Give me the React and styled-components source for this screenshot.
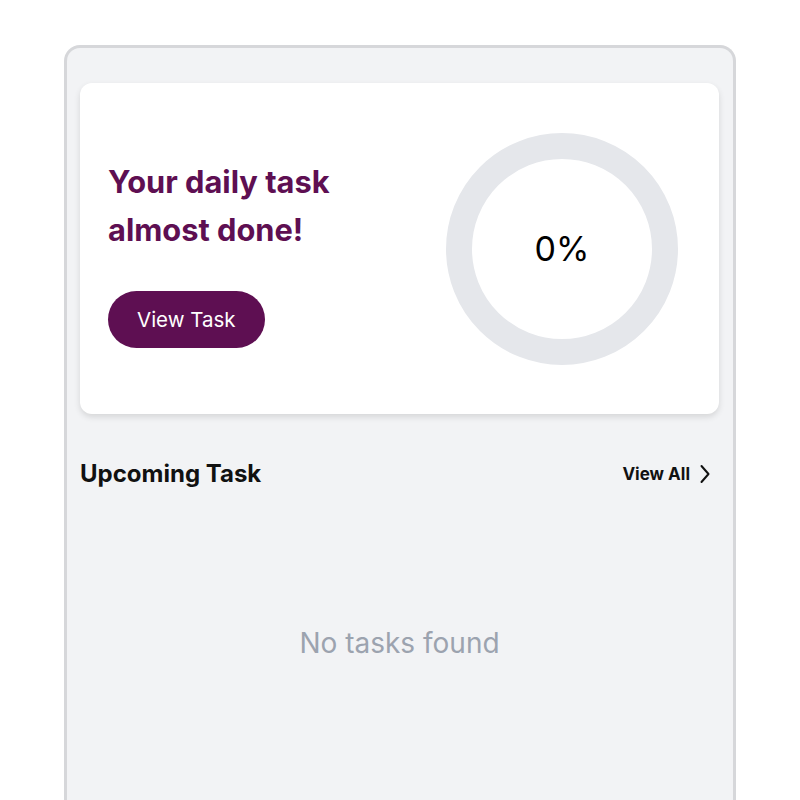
import React from 'react'
import styled, { createGlobalStyle } from 'styled-components'

const purple = '#5e0f52'

const Global = createGlobalStyle`
  body {
    margin: 0;
    background: #ffffff;
    font-family: Inter, "Noto Sans", sans-serif;
  }
`

const Frame = styled.div`
  box-sizing: border-box;
  width: 672px;
  min-height: 800px;
  margin: 45px auto 0;
  padding: 35px 14px 40px 13px;
  background: #f2f3f5;
  border: 3px solid #d6d7da;
  border-bottom: none;
  border-radius: 16px 16px 0 0;
`

const HeroCard = styled.section`
  display: flex;
  align-items: center;
  justify-content: space-between;
  height: 331px;
  box-sizing: border-box;
  padding: 0 41px 0 28px;
  background: #ffffff;
  border-radius: 12px;
  box-shadow: 0 3px 6px rgba(0, 0, 0, 0.12);
`

const Intro = styled.div`
  display: flex;
  flex-direction: column;
  align-items: flex-start;
  padding-top: 8px;
`

const Title = styled.h1`
  margin: 0;
  font-size: 30.8px;
  line-height: 48.5px;
  font-weight: 700;
  color: ${purple};
`

const Button = styled.button`
  margin-top: 36px;
  height: 57px;
  padding: 0 29px;
  border: none;
  border-radius: 999px;
  background: ${purple};
  color: #ffffff;
  font-family: inherit;
  font-size: 20.5px;
  font-weight: 400;
`

const Ring = styled.div`
  box-sizing: border-box;
  width: 232px;
  height: 232px;
  border-radius: 50%;
  border: 26px solid #e5e7eb;
  display: flex;
  align-items: center;
  justify-content: center;
  font-size: 34px;
  color: #000000;
`

const SectionHead = styled.div`
  display: flex;
  align-items: center;
  justify-content: space-between;
  margin-top: 45px;
  padding-right: 9px;
`

const SectionTitle = styled.h2`
  margin: 0;
  font-size: 24px;
  font-weight: 700;
  color: #111111;
`

const ViewAll = styled.a`
  display: flex;
  align-items: center;
  gap: 10px;
  font-size: 17px;
  font-weight: 700;
  color: #111111;
  text-decoration: none;
`

const Empty = styled.p`
  margin: 138px 0 0;
  text-align: center;
  font-size: 28px;
  color: #9ca3af;
`

const Chevron = () => (
  <svg width="10" height="20" viewBox="0 0 10 20" fill="none">
    <polyline points="1.5,2 8.5,10 1.5,18" stroke="#111" strokeWidth="2" strokeLinecap="round" strokeLinejoin="round" />
  </svg>
)

export default function App() {
  return (
    <>
      <Global />
      <Frame>
        <HeroCard>
          <Intro>
            <Title>Your daily task<br />almost done!</Title>
            <Button>View Task</Button>
          </Intro>
          <Ring>0%</Ring>
        </HeroCard>
        <SectionHead>
          <SectionTitle>Upcoming Task</SectionTitle>
          <ViewAll href="#">View All <Chevron /></ViewAll>
        </SectionHead>
        <Empty>No tasks found</Empty>
      </Frame>
    </>
  )
}
